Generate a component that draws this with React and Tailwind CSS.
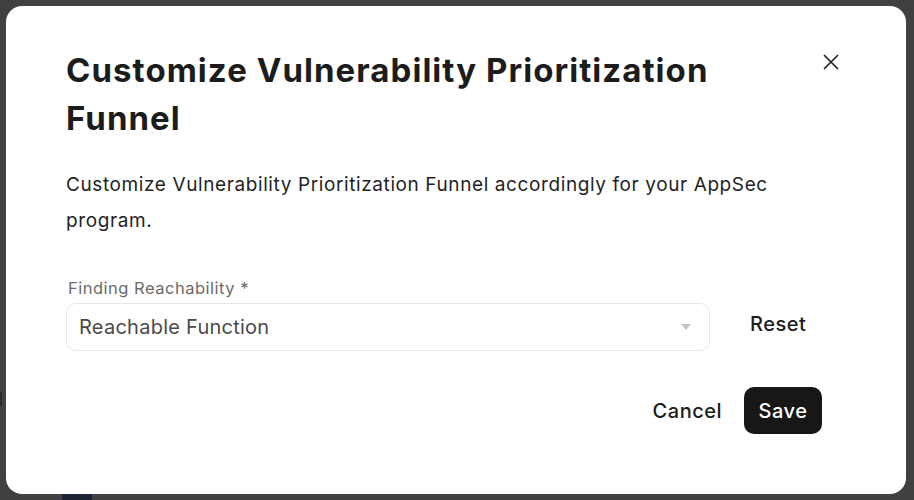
import React from "react";

export default function App() {
  return (
    <div className="relative h-[500px] w-[914px] overflow-hidden bg-[#414141] p-[6px]" style={{ fontFamily: "Inter, 'Noto Sans', sans-serif" }}>
      <div className="absolute left-0 top-[392px] h-[14px] w-[2px] bg-[#2a2a2a]" />
      <div className="absolute left-[62px] top-[494px] h-[6px] w-[30px] bg-[#1c2433]" />
      <div className="relative flex h-[488px] w-[900px] flex-col rounded-[16px] bg-white pl-[60px] pr-[84px] pt-[40px]">
        <button className="absolute right-[67px] top-[48px] text-[#222]">
          <svg width="16" height="16" viewBox="0 0 16 16" fill="none" stroke="currentColor" strokeWidth="1.7" strokeLinecap="round">
            <path d="M1.5 1.5L14.5 14.5M14.5 1.5L1.5 14.5" />
          </svg>
        </button>
        <h2 className="w-[700px] text-[33px] font-bold leading-[48px] tracking-[1.05px] text-[#1c1c1c]">
          Customize Vulnerability Prioritization Funnel
        </h2>
        <p className="mt-[25px] w-[760px] text-[19px] leading-[36px] tracking-[0.6px] text-[#1f1f1f]">
          Customize Vulnerability Prioritization Funnel accordingly for your AppSec program.
        </p>
        <div className="mt-[37px] flex items-end gap-[40px]">
          <div className="flex w-[644px] flex-col">
            <label className="pl-[2px] text-[16.5px] leading-[24px] tracking-[0.5px] text-[#6b6b6b]">Finding Reachability *</label>
            <div className="mt-[3px] flex h-[48px] items-center justify-between rounded-[10px] border border-[#e6e6e6] pl-[12px] pr-[18px]">
              <span className="text-[20px] tracking-[0.25px] text-[#4a4a4a]">Reachable Function</span>
              <svg width="10" height="6" viewBox="0 0 10 6">
                <path d="M0 0H10L5 6Z" fill="#c4c4c4" />
              </svg>
            </div>
          </div>
          <button className="mb-[15px] text-[20px] font-medium leading-[24px] tracking-[0.5px] text-[#1c1c1c]">Reset</button>
        </div>
        <div className="mt-[36px] flex items-center justify-end gap-[22px]">
          <button className="text-[20px] font-medium tracking-[0.5px] text-[#1c1c1c]">Cancel</button>
          <button className="h-[47px] w-[78px] rounded-[10px] bg-[#171717] text-[20px] font-medium tracking-[0.6px] text-white">Save</button>
        </div>
      </div>
    </div>
  );
}
